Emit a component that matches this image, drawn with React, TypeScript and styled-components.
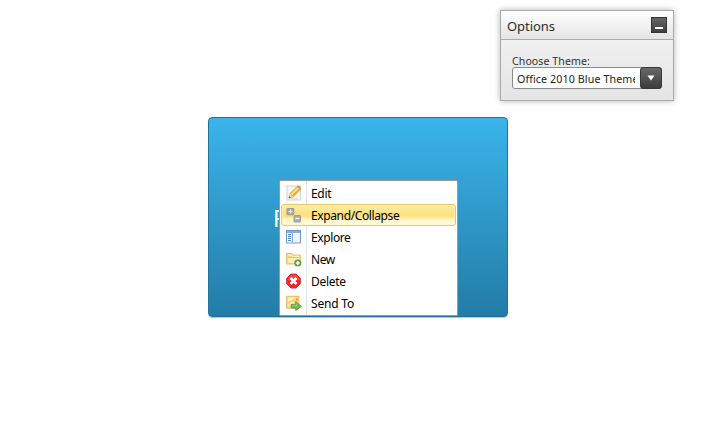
import React from "react";
import styled, { createGlobalStyle } from "styled-components";

const GlobalStyle = createGlobalStyle`
  * { box-sizing: border-box; }
  body { margin: 0; background: #fff; font-family: "Noto Sans", "Open Sans", sans-serif; overflow: hidden; }
`;

const Page = styled.main`
  display: flex;
  flex-direction: column;
  width: 716px;
  height: 435px;
  padding-top: 10px;
`;

const Panel = styled.section`
  align-self: flex-end;
  width: 174px;
  height: 91px;
  margin-right: 42px;
  border: 1px solid #aaa;
  background: linear-gradient(#f6f6f6, #e4e4e4);
  box-shadow: 0 0 6px rgba(0, 0, 0, 0.3);
`;

const PanelHeader = styled.header`
  display: flex;
  align-items: center;
  justify-content: space-between;
  height: 29px;
  padding: 0 6px;
  border-bottom: 1px solid #aaa;
  background: linear-gradient(#fff, #e4e4e4);
`;

const PanelTitle = styled.h1`
  margin: 1px 0 0;
  font-size: 13px;
  line-height: 18px;
  font-weight: 400;
  color: #2c2c2c;
  letter-spacing: -0.04px;
`;

const MinimizeButton = styled.button`
  display: flex;
  width: 16px;
  height: 16px;
  padding: 0;
  border: 1px solid #333;
  background: linear-gradient(#666, #3f3f3f);
`;

const PanelBody = styled.div`
  display: flex;
  flex-direction: column;
  padding: 14px 11px 0;
`;

const FieldLabel = styled.label`
  height: 13px;
  font-size: 10.6px;
  line-height: 15px;
  color: #333;
  letter-spacing: 0.07px;
`;

const Combo = styled.div`
  display: flex;
  width: 150px;
  height: 22px;
  border: 1px solid #8b8b8b;
  border-radius: 3px;
  background: #fff;
`;

const ComboValue = styled.span`
  width: 118px;
  margin-left: 4px;
  overflow: hidden;
  white-space: nowrap;
  font-size: 10.7px;
  line-height: 22px;
  color: #222;
  letter-spacing: 0.1px;
`;

const ComboButton = styled.button`
  display: flex;
  width: 22px;
  height: 22px;
  margin: -1px -1px 0 auto;
  padding: 0;
  flex: none;
  border: 1px solid #383838;
  border-radius: 3px;
  background: linear-gradient(#686868, #3c3c3c);
`;

const Card = styled.section`
  position: relative;
  display: flex;
  align-items: center;
  width: 300px;
  height: 200px;
  margin: 16px 0 0 208px;
  padding: 2px 0 0 64px;
  border: 1px solid #237299;
  border-radius: 4px;
  background: linear-gradient(#3ab4ea, #237ca6);
  box-shadow: 0 1px 0 #a9cede;
  color: #fff;
  font-size: 23px;
`;

const Menu = styled.ul`
  position: absolute;
  left: 70px;
  top: 62px;
  width: 179px;
  height: 136px;
  margin: 0;
  padding: 1px;
  list-style: none;
  border: 1px solid #9a9a9a;
  border-radius: 1px;
  background: linear-gradient(90deg, #fff 26px, #e2e4e7 26px, #e2e4e7 27px, #fff 27px);
`;

const MenuItem = styled.li<{ $active?: boolean }>`
  display: flex;
  align-items: center;
  width: 175px;
  height: 22px;
  padding-left: 4px;
  border: 1px solid ${(p) => (p.$active ? "#edc860" : "transparent")};
  border-radius: 3px;
  background: ${(p) => (p.$active ? "linear-gradient(#fceda9, #fde38a 35%, #fddf79 55%, #fff3bd 70%, #fffdec)" : "none")};
  box-shadow: ${(p) => (p.$active ? "inset 0 0 0 1px rgba(255, 244, 190, .6)" : "none")};
`;

const MenuText = styled.span<{ $spacing: number }>`
  margin: 2px 0 0 9px;
  font-size: 12px;
  line-height: 20px;
  color: #000;
  letter-spacing: ${(p) => p.$spacing}px;
  white-space: nowrap;
`;

const Icon = styled.svg`
  flex: none;
  display: block;
`;

const EditIcon = () => (
  <Icon width="16" height="16" viewBox="0 0 16 16">
    <rect x="1" y="1" width="13.5" height="14" fill="#f8f8f8" stroke="#d4d4d4" />
    <path d="M3 12.5h9v2H3z" fill="#e3e3e3" />
    <path d="M2.8 13l1.1-4.6L11.3 1.2l3.5 3.3L7.3 12z" fill="#edb52f" stroke="#d19a35" strokeWidth=".5" />
    <path d="M4.8 8.9L11.7 2l1.2 1.2-7 7z" fill="#fde38a" />
    <path d="M10.9 1.7l1-1q1.3 0 2 .6l1 1.4-.8 1.8z" fill="#b99a80" />
    <path d="M2.8 13l1.1-4.4 3.2 3.3z" fill="#f3dcae" />
    <path d="M2.8 13l.5-2L5 12.4z" fill="#5c4a3b" />
  </Icon>
);

const ExpandIcon = () => (
  <Icon width="16" height="16" viewBox="0 0 16 16">
    <rect x="1" y="1.5" width="6.8" height="6.3" rx=".5" fill="#aaa" stroke="#989898" />
    <path d="M2.5 4.5h4M4.5 2.5v4" stroke="#eee" />
    <rect x="8" y="8.5" width="6.5" height="6.5" rx=".5" fill="#aaa" stroke="#a0a0a0" />
    <path d="M9.3 11.5h4" stroke="#f8f8f8" strokeWidth="1.5" />
  </Icon>
);

const ExploreIcon = () => (
  <Icon width="16" height="16" viewBox="0 0 16 16">
    <rect x=".5" y="1.5" width="14" height="12.5" fill="#fff" stroke="#7198cb" />
    <path d="M1 2h13v2H1z" fill="#86ade0" />
    <path d="M2 5.5h3M2 7.5h3M2 9.5h3M2 11.5h3" stroke="#4f86ca" />
    <path d="M6.5 4v9.5" stroke="#7da5d8" />
    <path d="M8 5h6v8H8z" fill="#eff5fc" />
  </Icon>
);

const NewIcon = () => (
  <Icon width="16" height="16" viewBox="0 0 16 16">
    <path d="M.6 13V2.5h5l1 1.5h7.7v9z" fill="#f8d982" stroke="#e3bf6c" />
    <path d="M2 4h3.3l1 1.3H13" fill="none" stroke="#fff8d1" />
    <path d="M2 7h11.3v5H2z" fill="#fdeeb7" />
    <path d="M2 6.5h11" stroke="#dfbb69" strokeWidth=".8" />
    <circle cx="11.8" cy="12" r="3.6" fill="#659d44" />
    <path d="M9.9 12h3.8M11.8 10.1v3.8" stroke="#fff" strokeWidth="1.5" />
  </Icon>
);

const DeleteIcon = () => (
  <Icon width="16" height="16" viewBox="0 0 16 16">
    <path d="M5 1.1h5l4.3 4.2v5.4L10 15H5L.7 10.7V5.3z" fill="#ef2229" stroke="#e22a31" strokeLinejoin="round" />
    <path d="M5 2.1h5l3.3 3.6v1.5H1.7V5.6z" fill="#fa5658" opacity=".7" />
    <path d="M4.5 5l6 6m0-6l-6 6" stroke="#fff" strokeWidth="2.6" />
  </Icon>
);

const SendIcon = () => (
  <Icon width="16" height="16" viewBox="0 0 16 16">
    <rect x=".6" y="1.3" width="12.3" height="11.9" fill="#f7d681" stroke="#e7c06a" />
    <path d="M2 2.6h7.5L2 7z" fill="#fff1bb" />
    <path d="M2 10.8L5.4 8h2.4" fill="none" stroke="#fff2c6" strokeWidth="1.6" />
    <path d="M10 3h2v3h-2z" fill="#e8b25c" />
    <path d="M5.3 9.4h4.4V6.7l5.7 4.6-5.7 4.4v-2.6H5.3z" fill="#75b856" stroke="#579344" strokeWidth=".8" />
    <path d="M6.3 10.4h4.2V8.8" fill="none" stroke="#a5d689" strokeWidth=".8" />
  </Icon>
);

const items = [
  { label: "Edit", icon: EditIcon, spacing: -0.32 },
  { label: "Expand/Collapse", icon: ExpandIcon, spacing: -0.38, active: true },
  { label: "Explore", icon: ExploreIcon, spacing: -0.4 },
  { label: "New", icon: NewIcon, spacing: -0.4 },
  { label: "Delete", icon: DeleteIcon, spacing: -0.3 },
  { label: "Send To", icon: SendIcon, spacing: -0.2 },
];

export default function App() {
  return (
    <Page>
      <GlobalStyle />
      <Panel>
        <PanelHeader>
          <PanelTitle>Options</PanelTitle>
          <MinimizeButton aria-label="Minimize">
            <Icon width="14" height="14" viewBox="0 0 14 14">
              <path d="M3 9h8v2H3z" fill="#fff" />
            </Icon>
          </MinimizeButton>
        </PanelHeader>
        <PanelBody>
          <FieldLabel>Choose Theme:</FieldLabel>
          <Combo>
            <ComboValue>Office 2010 Blue Theme</ComboValue>
            <ComboButton aria-label="Open themes">
              <Icon width="20" height="20" viewBox="0 0 20 20">
                <path d="M6.5 7.5h7L10 12.5z" fill="#fff" />
              </Icon>
            </ComboButton>
          </Combo>
        </PanelBody>
      </Panel>
      <Card>
        P
        <Menu>
          {items.map(({ label, icon: Glyph, spacing, active }) => (
            <MenuItem key={label} $active={active}>
              <Glyph />
              <MenuText $spacing={spacing}>{label}</MenuText>
            </MenuItem>
          ))}
        </Menu>
      </Card>
    </Page>
  );
}
